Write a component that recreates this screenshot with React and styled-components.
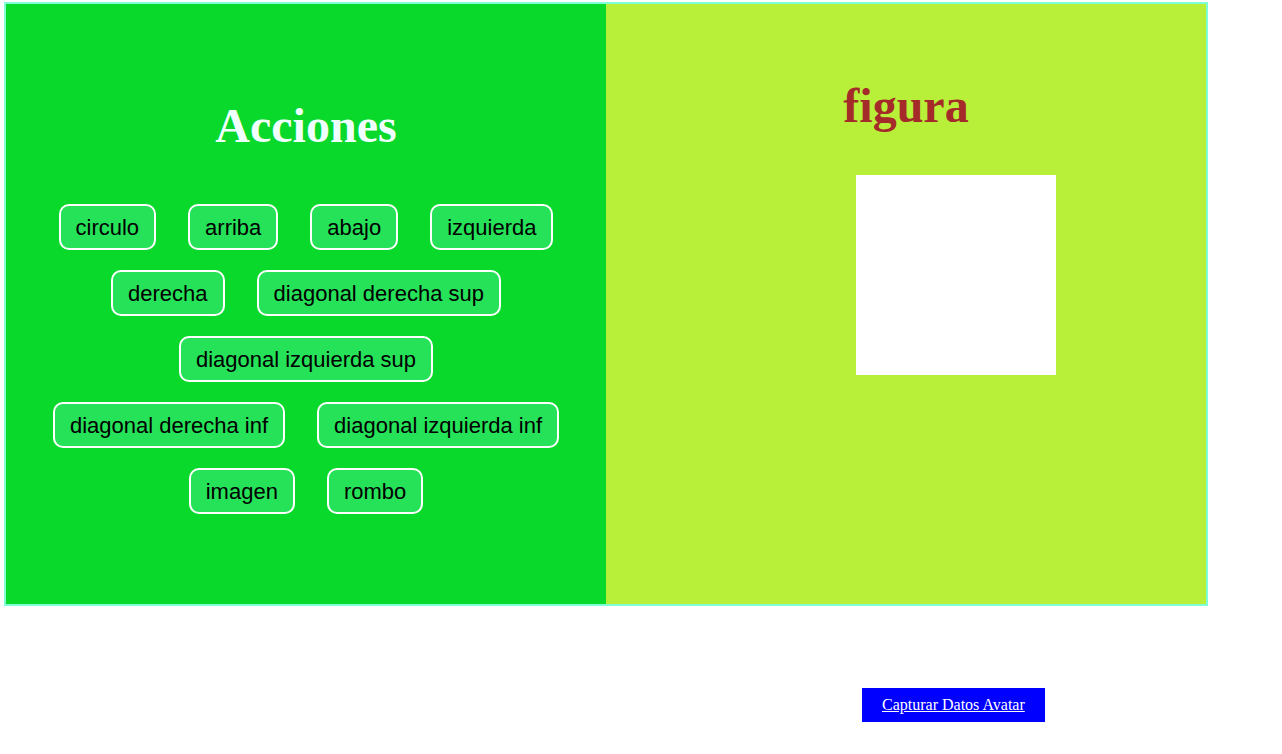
import React from 'react';
import styled, { createGlobalStyle } from 'styled-components';

const GlobalStyle = createGlobalStyle`
  body {
    margin: 0;
    background: #fff;
    font-family: "Liberation Serif", "Times New Roman", serif;
  }
`;

const Page = styled.div`
  padding: 2px 4px 0 4px;
`;

const Tablero = styled.div`
  width: 1200px;
  height: 600px;
  border: 2px solid aquamarine;
  display: flex;
`;

const Panel = styled.section`
  width: 600px;
  height: 600px;
  background: ${(p) => p.$fondo};
  display: flex;
  flex-direction: column;
  align-items: center;
`;

const Titulo = styled.h1`
  font-family: "Liberation Serif", "Times New Roman", serif;
  font-size: 48px;
  font-weight: bold;
  line-height: 55px;
  color: ${(p) => p.$color};
  margin: ${(p) => p.$margen};
`;

const Botonera = styled.div`
  width: 512px;
  display: flex;
  flex-wrap: wrap;
  justify-content: center;
  column-gap: 32px;
  row-gap: 20px;
`;

const Boton = styled.button`
  font-family: "Liberation Sans", Arial, sans-serif;
  font-size: 22px;
  line-height: 25px;
  color: #000;
  background: #26e259;
  border: 2px solid #fff;
  border-radius: 10px;
  padding: 9px 15px 8px;
  cursor: pointer;
`;

const Figura = styled.div`
  align-self: flex-start;
  margin: 42px 0 0 250px;
  width: 200px;
  height: 200px;
  background: #fff;
`;

const Pie = styled.div`
  display: flex;
  padding: 82px 0 0 858px;
`;

const Enlace = styled.a`
  display: block;
  background: #0000ff;
  color: #fff;
  font-family: "Liberation Serif", "Times New Roman", serif;
  font-size: 16px;
  line-height: 18px;
  padding: 8px 20px;
  text-decoration: underline;
  cursor: pointer;
`;

const acciones = [
  'circulo',
  'arriba',
  'abajo',
  'izquierda',
  'derecha',
  'diagonal derecha sup',
  'diagonal izquierda sup',
  'diagonal derecha inf',
  'diagonal izquierda inf',
  'imagen',
  'rombo',
];

export default function App() {
  return (
    <Page>
      <GlobalStyle />
      <Tablero>
        <Panel $fondo="#08d92b">
          <Titulo $color="#f0ffff" $margen="94px 0 51px">Acciones</Titulo>
          <Botonera>
            {acciones.map((a) => (
              <Boton key={a}>{a}</Boton>
            ))}
          </Botonera>
        </Panel>
        <Panel $fondo="#b8ef38">
          <Titulo $color="#a52a2a" $margen="74px 0 0">figura</Titulo>
          <Figura />
        </Panel>
      </Tablero>
      <Pie>
        <Enlace href="#">Capturar Datos Avatar</Enlace>
      </Pie>
    </Page>
  );
}
